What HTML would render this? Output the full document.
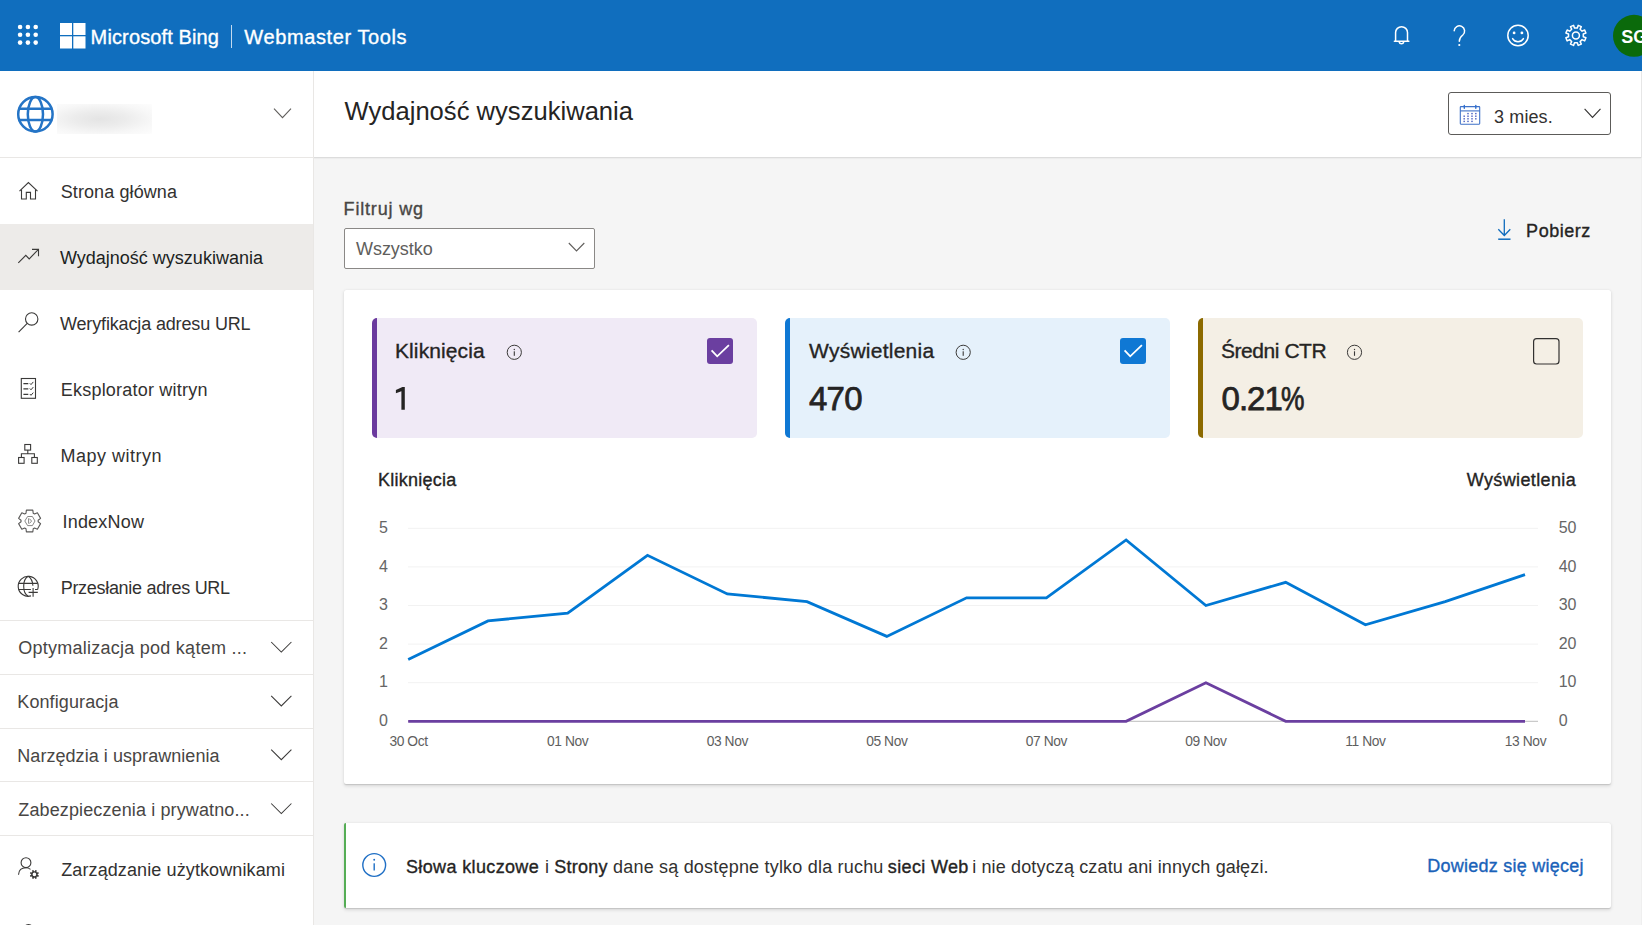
<!DOCTYPE html>
<html><head><meta charset="utf-8">
<style>
*{box-sizing:border-box;margin:0;padding:0}
html,body{width:1642px;height:925px;overflow:hidden;background:#f5f5f5;font-family:"Liberation Sans",sans-serif;color:#323130}
.a{position:absolute;white-space:nowrap;line-height:1}
svg{position:absolute;overflow:visible}
.s18{font-size:18px}
.nt{font-size:18px;color:#323130;left:60px}
.gt{font-size:18px;color:#484644;left:18px}
.sb{-webkit-text-stroke:0.35px currentColor}
.ln{position:absolute;height:1px;background:#e9e7e5}
.tile{position:absolute;top:318px;width:385px;height:120px;border-radius:5px}
.tt{font-size:21px;color:#252423}
.tv{font-size:33px;font-weight:400;color:#252423;-webkit-text-stroke:0.75px #252423}
.ax{font-size:16px;color:#666}
.xl{font-size:13px;color:#555}
</style></head><body>

<!-- HEADER -->
<div class="a" style="left:0;top:0;width:1642px;height:71px;background:#106ebe"></div>
<svg style="left:0;top:0" width="1642" height="71" viewBox="0 0 1642 71">
  <g fill="#fff">
    <circle cx="20.1" cy="27" r="2.3"/><circle cx="27.9" cy="27" r="2.3"/><circle cx="35.7" cy="27" r="2.3"/>
    <circle cx="20.1" cy="34.8" r="2.3"/><circle cx="27.9" cy="34.8" r="2.3"/><circle cx="35.7" cy="34.8" r="2.3"/>
    <circle cx="20.1" cy="42.6" r="2.3"/><circle cx="27.9" cy="42.6" r="2.3"/><circle cx="35.7" cy="42.6" r="2.3"/>
    <rect x="60" y="23" width="12" height="12"/><rect x="73.3" y="23" width="12.2" height="12"/>
    <rect x="60" y="36.3" width="12" height="12.2"/><rect x="73.3" y="36.3" width="12.2" height="12.2"/>
  </g>
  <rect x="231" y="25" width="1" height="23" fill="#fff" opacity=".75"/>
  <g fill="none" stroke="#fff" stroke-width="1.5" stroke-linecap="round">
    <!-- bell -->
    <path d="M1395.6 41.2 V32.6 a5.95 5.95 0 0 1 11.9 0 V41.2"/>
    <path d="M1394.4 41.3 H1408.8" stroke-width="1.6"/>
    <path d="M1399.2 42 a2.3 2.3 0 0 0 4.5 0"/>
    <!-- question -->
    <path d="M1454.2 30.8 a5.2 5.2 0 1 1 8.6 4.2 c-2.4 1.9 -3.5 3 -3.5 6.2"/>
    <circle cx="1459.3" cy="45" r="1.1" fill="#fff" stroke="none"/>
    <!-- smiley -->
    <circle cx="1518" cy="35.5" r="10.2"/>
    <path d="M1512.6 38.6 a6.2 6.2 0 0 0 10.8 0"/>
  </g>
  <circle cx="1514.1" cy="32.9" r="1.4" fill="#fff"/><circle cx="1521.9" cy="32.9" r="1.4" fill="#fff"/>
  <!-- gear -->
  <g transform="translate(1575.9 35.4)" fill="none" stroke="#fff" stroke-width="1.5" stroke-linejoin="round">
    <path d="M1.40 -7.37 L2.33 -10.03 L5.45 -8.74 L4.22 -6.20 L6.20 -4.22 L8.74 -5.45 L10.03 -2.33 L7.37 -1.40 L7.37 1.40 L10.03 2.33 L8.74 5.45 L6.20 4.22 L4.22 6.20 L5.45 8.74 L2.33 10.03 L1.40 7.37 L-1.40 7.37 L-2.33 10.03 L-5.45 8.74 L-4.22 6.20 L-6.20 4.22 L-8.74 5.45 L-10.03 2.33 L-7.37 1.40 L-7.37 -1.40 L-10.03 -2.33 L-8.74 -5.45 L-6.20 -4.22 L-4.22 -6.20 L-5.45 -8.74 L-2.33 -10.03 L-1.40 -7.37 Z"/>
    <circle r="3.5"/>
  </g>
  <circle cx="1634" cy="35.8" r="21" fill="#0b6a0b"/>
</svg>
<div class="a" style="left:90.6px;top:26.5px;font-size:20px;color:#fff;letter-spacing:0.13px;-webkit-text-stroke:0.35px #fff" id="mb">Microsoft Bing</div>
<div class="a" style="left:244.3px;top:26.5px;font-size:20px;color:#fff;letter-spacing:0.61px;-webkit-text-stroke:0.35px #fff">Webmaster Tools</div>
<div class="a" style="left:1621.3px;top:27.5px;font-size:18px;color:#fff;font-weight:700">SG</div>

<!-- SIDEBAR -->
<div class="a" style="left:0;top:71px;width:313px;height:854px;background:#fff"></div>
<div class="a" style="left:313px;top:71px;width:1px;height:854px;background:#e9e7e5"></div>
<div class="ln" style="left:0;top:157px;width:313px"></div>
<svg style="left:0;top:0" width="313" height="925" viewBox="0 0 313 925">
  <!-- globe -->
  <g fill="none" stroke="#2474c6" stroke-width="2.5">
    <circle cx="35.4" cy="114.3" r="17.2"/>
    <ellipse cx="35.4" cy="114.3" rx="7.6" ry="17.2"/>
    <path d="M18.5 108.7 H52.3 M18.5 120 H52.3"/>
  </g>
  <path d="M274 108.6 L282.5 117.6 L291 108.6" fill="none" stroke="#605e5c" stroke-width="1.1"/>
</svg>
<div class="a" style="left:57px;top:104px;width:95px;height:30px;background:radial-gradient(ellipse at 45% 50%,#e4e4e4 0%,#ececec 35%,#f7f7f7 70%,#fdfdfd 100%)"></div>

<div class="a" style="left:0;top:224px;width:313px;height:66px;background:#edebe9"></div>
<svg style="left:0;top:0" width="313" height="925" viewBox="0 0 313 925">
  <g fill="none" stroke="#3b3a39" stroke-width="1.1" stroke-linejoin="miter">
    <!-- home -->
    <path d="M19.5 191.2 L28.4 182.6 L37.5 191.2"/>
    <path d="M21.5 189.4 V199 H26.3 V192.4 H30.5 V199 H35.5 V189.4"/>
    <!-- trend -->
    <path d="M18.3 262.8 L25.8 255.3 L29.2 258.9 L38.2 249.6"/>
    <path d="M32 249.4 H38.5 V256.2"/>
    <!-- search -->
    <circle cx="31.7" cy="318.9" r="6.2"/>
    <path d="M27.2 323.4 L18.6 332.2"/>
    <!-- explorer -->
    <rect x="21.3" y="378.5" width="14.2" height="19.8"/>
    <path d="M23.4 383.7 H28.3 M23.4 388.9 H28.3 M23.4 394.4 H28.3" stroke-width="1.3"/>
    <path d="M29.8 383.3 L31 384.6 L33.3 381.9 M29.8 388.5 L31 389.8 L33.3 387.1 M29.8 394 L31 395.3 L33.3 392.6" stroke-width="1"/>
    <!-- sitemap -->
    <rect x="24.8" y="444.5" width="5.8" height="5.6"/>
    <path d="M27.8 450.1 V453.7 M21.4 457.4 V453.7 H34.4 V457.4"/>
    <rect x="18.6" y="457.5" width="5.5" height="5.8"/>
    <rect x="31.8" y="457.5" width="5.5" height="5.8"/>
    <!-- indexnow gear -->
    <path stroke="#5a5958" stroke-linejoin="round" d="M26.00 513.19 L26.39 510.17 L32.81 510.17 L33.20 513.19 L34.56 513.98 L37.38 512.80 L40.59 518.36 L38.16 520.21 L38.16 521.79 L40.59 523.64 L37.38 529.20 L34.56 528.02 L33.20 528.81 L32.81 531.83 L26.39 531.83 L26.00 528.81 L24.64 528.02 L21.82 529.20 L18.61 523.64 L21.04 521.79 L21.04 520.21 L18.61 518.36 L21.82 512.80 L24.64 513.98 Z"/>
    <path d="M24.8 521 L27.6 516.5 H32.4 L35 521 L32.4 525.6 H27.6 Z" stroke="#7a7978" stroke-width="0.9" stroke-linejoin="round"/>
    <path d="M28.6 518.4 V523.6 M29.4 518.7 L31.6 521.1 L29.4 523.5" stroke="#7a7978" stroke-width="0.9"/>
    <!-- globe plus -->
    <path d="M30.96 595.9 A10 10 0 1 1 37.71 589.39"/>
    <path d="M28.2 576.3 C22.2 579.5 22.2 593.1 28.2 596.3"/>
    <path d="M28.2 576.3 C31.2 578.2 32.7 581.5 32.9 585.8"/>
    <path d="M18.6 583.4 H37.6 M18.6 589.5 H30.9 M35 589.5 H37.8"/>
    <path d="M33.1 588 V596.8 M28.6 592.4 H37.8"/>
    <!-- user -->
    <circle cx="26" cy="862.7" r="4.9"/>
    <path d="M18.5 874.7 C18.8 870.2 22 867.8 26 867.8 C27.8 867.8 29.2 868.3 30.5 869.4"/>
    <path fill="#3b3a39" stroke="none" fill-rule="evenodd" d="M34.82 871.13 L35.39 869.91 L36.88 870.53 L36.42 871.79 L37.01 872.38 L38.27 871.92 L38.89 873.41 L37.67 873.98 L37.67 874.82 L38.89 875.39 L38.27 876.88 L37.01 876.42 L36.42 877.01 L36.88 878.27 L35.39 878.89 L34.82 877.67 L33.98 877.67 L33.41 878.89 L31.92 878.27 L32.38 877.01 L31.79 876.42 L30.53 876.88 L29.91 875.39 L31.13 874.82 L31.13 873.98 L29.91 873.41 L30.53 871.92 L31.79 872.38 L32.38 871.79 L31.92 870.53 L33.41 869.91 L33.98 871.13 Z M36.2 874.4 A1.8 1.8 0 1 0 32.6 874.4 A1.8 1.8 0 1 0 36.2 874.4 Z"/>
  </g>
  <!-- group chevrons -->
  <g fill="none" stroke="#3b3a39" stroke-width="1.05">
    <path d="M271.2 642 L281.3 652.1 L291.4 642"/>
    <path d="M271.2 695.8 L281.3 705.9 L291.4 695.8"/>
    <path d="M271.2 749.6 L281.3 759.7 L291.4 749.6"/>
    <path d="M271.2 803.5 L281.3 813.6 L291.4 803.5"/>
  </g>
  <path d="M23.5 929.5 a5 5 0 0 1 10 0" fill="none" stroke="#3b3a39" stroke-width="1.1"/>
</svg>
<div class="a nt" style="top:182.8px;left:60.7px;letter-spacing:0.1px">Strona główna</div>
<div class="a nt" style="top:248.8px;color:#201f1e">Wydajność wyszukiwania</div>
<div class="a nt" style="top:314.8px;letter-spacing:-0.15px">Weryfikacja adresu URL</div>
<div class="a nt" style="top:380.8px;left:60.8px;letter-spacing:0.21px">Eksplorator witryn</div>
<div class="a nt" style="top:446.8px;left:60.5px;letter-spacing:0.5px">Mapy witryn</div>
<div class="a nt" style="top:512.8px;left:62.5px;letter-spacing:0.2px">IndexNow</div>
<div class="a nt" style="top:578.8px;left:60.7px;letter-spacing:-0.3px">Przesłanie adres URL</div>
<div class="ln" style="left:0;top:620px;width:313px"></div>
<div class="a gt" style="top:638.8px;left:18.3px;letter-spacing:0.25px">Optymalizacja pod kątem ...</div>
<div class="ln" style="left:0;top:674px;width:313px"></div>
<div class="a gt" style="top:692.8px;left:17.3px;letter-spacing:0.1px">Konfiguracja</div>
<div class="ln" style="left:0;top:728px;width:313px"></div>
<div class="a gt" style="top:746.7px;left:17.3px;letter-spacing:0.05px">Narzędzia i usprawnienia</div>
<div class="ln" style="left:0;top:781px;width:313px"></div>
<div class="a gt" style="top:801.2px;left:18.3px;letter-spacing:0.12px">Zabezpieczenia i prywatno...</div>
<div class="ln" style="left:0;top:835px;width:313px"></div>
<div class="a nt" style="top:860.5px;left:61.2px;letter-spacing:0.11px">Zarządzanie użytkownikami</div>

<!-- MAIN TOP BAR -->
<div class="a" style="left:314px;top:71px;width:1327px;height:86px;background:#fff"></div>
<div class="a" style="left:314px;top:157px;width:1327px;height:1px;background:#dcdcdc;box-shadow:0 1px 1px rgba(0,0,0,.04)"></div>
<div class="a" style="left:1641px;top:71px;width:1px;height:87px;background:#e6e6e6"></div><div class="a" style="left:1641px;top:158px;width:1px;height:767px;background:#efefef"></div>
<div class="a" style="left:344.5px;top:99.4px;font-size:25.6px;color:#252423;letter-spacing:0px">Wydajność wyszukiwania</div>
<div class="a" style="left:1448px;top:92px;width:163px;height:43px;border:1px solid #5c5b59;border-radius:3px;background:#fff"></div>
<svg style="left:0;top:0" width="1642" height="160" viewBox="0 0 1642 160">
  <g fill="none" stroke="#3f72c8" stroke-width="1.1"><rect x="1460.3" y="106.6" width="19.4" height="17.6" rx="0.6"/><path d="M1460.3 110.9 H1479.7"/></g><g stroke="#2f6fcf" stroke-width="1.4" stroke-linecap="round"><path d="M1464.3 105.4 V108.2 M1475.8 105.4 V108.2"/></g><g fill="#5a6fc8"><rect x="1467.2" y="112.9" width="1.6" height="1.4"/><rect x="1471.2" y="112.9" width="1.6" height="1.4"/><rect x="1475.0" y="112.9" width="1.6" height="1.4"/><rect x="1463.4" y="115.5" width="1.6" height="1.4"/><rect x="1467.2" y="115.5" width="1.6" height="1.4"/><rect x="1471.2" y="115.5" width="1.6" height="1.4"/><rect x="1475.0" y="115.5" width="1.6" height="1.4"/><rect x="1463.4" y="118.1" width="1.6" height="1.4"/><rect x="1467.2" y="118.1" width="1.6" height="1.4"/><rect x="1471.2" y="118.1" width="1.6" height="1.4"/><rect x="1475.0" y="118.1" width="1.6" height="1.4"/><rect x="1463.4" y="120.7" width="1.6" height="1.4"/><rect x="1467.2" y="120.7" width="1.6" height="1.4"/><rect x="1471.2" y="120.7" width="1.6" height="1.4"/></g>
  <path d="M1584.6 108.8 L1592.5 117.4 L1600.5 108.8" fill="none" stroke="#323130" stroke-width="1.1"/>
</svg>
<div class="a s18" style="left:1494.1px;top:107.6px;color:#323130;letter-spacing:0.1px">3 mies.</div>

<!-- FILTER -->
<div class="a s18 sb" style="left:343.6px;top:200px;color:#484644;letter-spacing:0.82px">Filtruj wg</div>
<div class="a" style="left:344px;top:227.5px;width:251px;height:41px;border:1px solid #8a8886;border-radius:2px;background:#fff"></div>
<div class="a s18" style="left:356px;top:239.6px;color:#605e5c;letter-spacing:-0.05px">Wszystko</div>
<svg style="left:0;top:0" width="1642" height="300" viewBox="0 0 1642 300">
  <path d="M568.8 243 L576.5 251 L584.3 243" fill="none" stroke="#605e5c" stroke-width="1.1"/>
  <g fill="none" stroke="#0f6cbd" stroke-width="1.3">
    <path d="M1504.3 219.2 V235.3 M1498.3 229.3 L1504.3 235.5 L1510.3 229.3"/>
    <path d="M1498.2 239.2 H1510.5" stroke-width="1.5"/>
  </g>
</svg>
<div class="a s18 sb" style="left:1526.1px;top:221.6px;color:#252423;letter-spacing:0.53px">Pobierz</div>

<!-- CARD -->
<div class="a" style="left:344px;top:290px;width:1267px;height:494px;background:#fff;border-radius:2px;box-shadow:0 1.6px 3.6px rgba(0,0,0,.13),0 0.3px 0.9px rgba(0,0,0,.11)"></div>

<div class="tile" style="left:372px;background:#f0eaf6;border-left:5px solid #6b3a9e"></div>
<div class="tile" style="left:785px;background:#e5f1fb;border-left:5px solid #0f78d4"></div>
<div class="tile" style="left:1198px;background:#f4efe5;border-left:5px solid #8c6a00"></div>
<div class="a tt sb" style="left:395px;top:340.2px;letter-spacing:0.1px">Kliknięcia</div>
<div class="a tt sb" style="left:809px;top:340.2px;letter-spacing:0.25px">Wyświetlenia</div>
<div class="a tt sb" style="left:1221px;top:340.2px;letter-spacing:-0.45px">Średni CTR</div>
<svg style="left:0;top:0" width="420" height="420" viewBox="0 0 420 420"><path d="M401.4 409.8 H404.8 V387 H402.4 L395.9 390.1 V393.2 L401.4 391.2 Z" fill="#252423"/></svg>
<div class="a tv" style="left:808.9px;top:382.2px;letter-spacing:-0.7px">470</div>
<div class="a tv" style="left:1221.6px;top:382.2px;letter-spacing:-1px">0.21<span style="display:inline-block;transform:scaleX(0.8);transform-origin:0 0;margin-left:-0.5px">%</span></div>
<svg style="left:0;top:0" width="1642" height="460" viewBox="0 0 1642 460">
  <g fill="none" stroke="#3b3a39" stroke-width="1">
    <circle cx="514.3" cy="352.3" r="7.1"/>
    <circle cx="963.2" cy="352.3" r="7.1"/>
    <circle cx="1354.5" cy="352.3" r="7.1"/>
  </g>
  <g fill="#3b3a39">
    <rect x="513.75" y="351.3" width="1.1" height="4.5"/><circle cx="514.3" cy="349.5" r="0.7"/>
    <rect x="962.65" y="351.3" width="1.1" height="4.5"/><circle cx="963.2" cy="349.5" r="0.7"/>
    <rect x="1353.95" y="351.3" width="1.1" height="4.5"/><circle cx="1354.5" cy="349.5" r="0.7"/>
  </g>
  <rect x="707" y="338" width="26" height="26" rx="3" fill="#6b3fa0"/>
  <rect x="1120" y="338" width="26" height="26" rx="3" fill="#0f78d4"/>
  <rect x="1533.6" y="338.6" width="25.4" height="25.4" rx="3" fill="none" stroke="#323130" stroke-width="1.2"/>
  <g fill="none" stroke="#fff" stroke-width="1.8">
    <path d="M711.6 350.3 L717.2 356.3 L728.9 345.1"/>
    <path d="M1124.6 350.3 L1130.2 356.3 L1141.9 345.1"/>
  </g>
</svg>

<!-- CHART -->
<div class="a s18 sb" style="left:378px;top:470.8px;color:#252423;letter-spacing:0.25px">Kliknięcia</div>
<div class="a s18 sb" style="left:1466.8px;top:470.8px;color:#252423;letter-spacing:0.37px">Wyświetlenia</div>
<svg style="left:0;top:0" width="1642" height="800" viewBox="0 0 1642 800">
  <g stroke="#f2f2f2" stroke-width="1">
    <path d="M408 528.3 H1538 M408 566.9 H1538 M408 605.5 H1538 M408 644.1 H1538 M408 682.7 H1538"/>
  </g>
  <path d="M408 721.3 H1538" stroke="#bdbdbd" stroke-width="1"/>
  <polyline fill="none" stroke="#0078d4" stroke-width="2.8" stroke-linejoin="miter" points="408.2,659.5 488.0,620.9 567.7,613.2 647.5,555.3 727.3,593.9 807.0,601.6 886.8,636.4 966.6,597.8 1046.4,597.8 1126.1,539.9 1205.9,605.5 1285.7,582.3 1365.4,624.8 1445.2,601.6 1525.0,574.6"/>
  <polyline fill="none" stroke="#6b3fa0" stroke-width="2.8" points="408.2,721.3 488.0,721.3 567.7,721.3 647.5,721.3 727.3,721.3 807.0,721.3 886.8,721.3 966.6,721.3 1046.4,721.3 1126.1,721.3 1205.9,682.7 1285.7,721.3 1365.4,721.3 1445.2,721.3 1525.0,721.3"/>
  <g font-family="Liberation Sans" font-size="16" fill="#666" text-anchor="end">
    <text x="388" y="533">5</text><text x="388" y="571.6">4</text><text x="388" y="610.2">3</text><text x="388" y="648.8">2</text><text x="388" y="687.4">1</text><text x="388" y="726">0</text>
  </g>
  <g font-family="Liberation Sans" font-size="16" fill="#666">
    <text x="1558.7" y="533">50</text><text x="1558.7" y="571.6">40</text><text x="1558.7" y="610.2">30</text><text x="1558.7" y="648.8">20</text><text x="1558.7" y="687.4">10</text><text x="1558.7" y="726">0</text>
  </g>
  <g font-family="Liberation Sans" font-size="13.8" fill="#5e5e5e" text-anchor="middle" letter-spacing="-0.4">
    <text x="408.5" y="746">30 Oct</text><text x="567.7" y="746">01 Nov</text><text x="727.3" y="746">03 Nov</text><text x="886.8" y="746">05 Nov</text><text x="1046.4" y="746">07 Nov</text><text x="1205.9" y="746">09 Nov</text><text x="1365.4" y="746">11 Nov</text><text x="1525.5" y="746">13 Nov</text>
  </g>
</svg>

<!-- BANNER -->
<div class="a" style="left:344px;top:823px;width:1267px;height:85px;background:#fff;border-left:2px solid #55ad55;border-radius:2px;box-shadow:0 1.6px 3.6px rgba(0,0,0,.13),0 0.3px 0.9px rgba(0,0,0,.11)"></div>
<svg style="left:0;top:0" width="1642" height="925" viewBox="0 0 1642 925">
  <circle cx="374.2" cy="865" r="11.4" fill="none" stroke="#1f6fc5" stroke-width="1.4"/>
  <rect x="373.5" y="863.3" width="1.4" height="7.2" fill="#1f6fc5"/>
  <circle cx="374.2" cy="859.8" r="0.95" fill="#1f6fc5"/>
</svg>
<div class="a s18 sb" style="left:406px;top:857.7px;color:#252423;letter-spacing:0.36px;-webkit-text-stroke:0.35px #252423">Słowa kluczowe</div><div class="a s18" style="left:545px;top:857.7px;color:#323130">i</div><div class="a s18 sb" style="left:554.3px;top:857.7px;color:#252423;letter-spacing:0.25px;-webkit-text-stroke:0.35px #252423">Strony</div>
<div class="a s18" style="left:613px;top:857.7px;color:#323130;letter-spacing:0.2px">dane są dostępne tylko dla ruchu</div>
<div class="a s18" style="left:887.8px;top:857.7px;color:#252423;letter-spacing:0.36px;-webkit-text-stroke:0.35px #252423">sieci Web</div>
<div class="a s18" style="left:972.2px;top:857.7px;color:#323130;letter-spacing:0.14px">i nie dotyczą czatu ani innych gałęzi.</div>
<div class="a s18 sb" style="left:1427.2px;top:857px;color:#1a62b9;letter-spacing:0.25px">Dowiedz się więcej</div>

</body></html>
